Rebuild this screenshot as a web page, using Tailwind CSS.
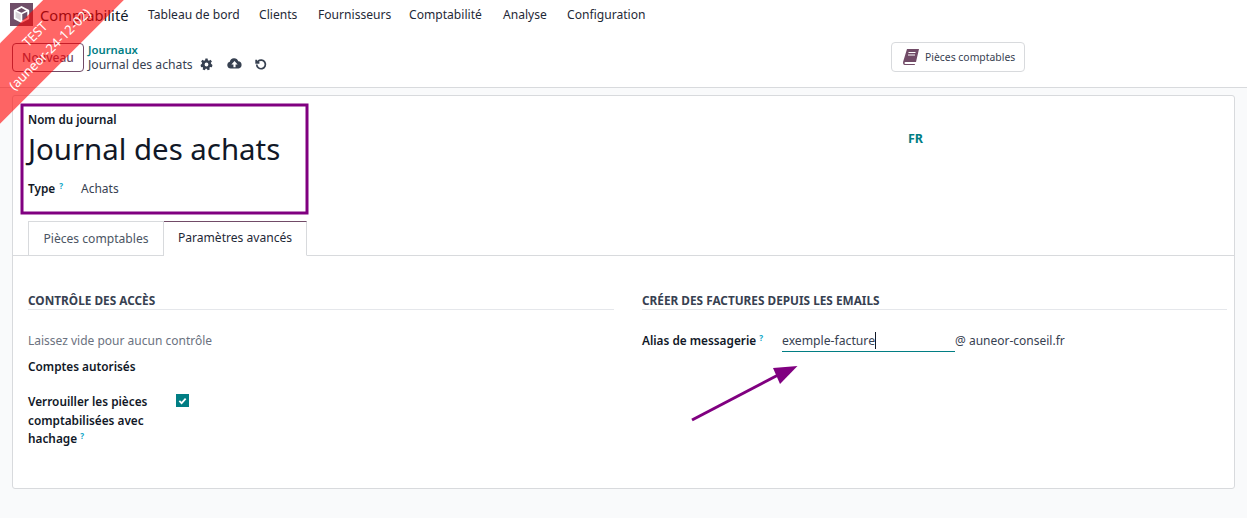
<!DOCTYPE html>
<html><head><script src="https://cdn.jsdelivr.net/npm/@tailwindcss/browser@4"></script></head>
<body class="w-[1247px] h-[518px] overflow-hidden relative bg-[#f9fafb] font-['Noto_Sans',sans-serif] text-[12px] text-[#374151]">
<header class="h-[29px] bg-white flex items-center pl-[10px]">
  <div class="w-[23px] h-[23px] bg-[#6f4f69] flex items-center justify-center">
    <svg viewBox="0 0 24 24" class="w-[19px] h-[19px]"><path d="M4 7l8 4v10l-8-4z" fill="#d9d3d8"/><path d="M12 2.500 20.500 7v10L12 21.500 3.500 17V7z" fill="none" stroke="#fff" stroke-width="2.400" stroke-linejoin="round"/><path d="M4 7l8 4 8-4M12 11v10" fill="none" stroke="#fff" stroke-width="2"/></svg>
  </div>
  <span class="ml-[7px] text-[14.700px] text-[#111827] w-[108px] pt-[1px] whitespace-nowrap">Comptabilité</span>
  <nav class="flex gap-[20px] text-[12.100px] text-[#1f2937] pt-[1px] whitespace-nowrap"><span class="w-[91px]">Tableau de bord</span><span class="w-[39px]">Clients</span><span class="w-[71px]">Fournisseurs</span><span class="w-[74px]">Comptabilité</span><span class="w-[44px]">Analyse</span><span>Configuration</span></nav>
</header>
<section class="h-[59px] bg-white border-b border-[#d8dadd] flex items-start relative">
  <button class="ml-[12px] mt-[14px] h-[29px] w-[72px] border border-[#714b67] rounded-[4px] text-[#714b67] text-[12px] font-medium">Nouveau</button>
  <div class="ml-[4px] mt-[13px] leading-[15px]">
    <div class="text-[#017e84] text-[11.300px] font-semibold">Journaux</div>
    <div class="flex items-center text-[12.200px] -mt-[0.5px]"><span>Journal des achats</span>
      <svg class="ml-[7px] w-[13px] h-[13px]" viewBox="0 0 24 24" fill="#374151"><path fill-rule="evenodd" d="M10 1h4l.6 3.200 2 .9L19.400 3l2.600 3.400-2 2.200.5 2.200L23 13l-1 4-3.200-.5-1.500 1.600.8 3.200-3.900 1.500-1.600-2.800h-2.200l-1.600 2.800-3.900-1.500.8-3.200-1.500-1.600L2 17l-1-4 2.500-2.200.5-2.200L2 6.400 4.600 3l2.800 2.100 2-.9zM12 8.500a3.500 3.500 0 1 0 0 7 3.500 3.500 0 0 0 0-7z"/></svg>
      <svg class="ml-[14px] mb-[2px] w-[15px] h-[13px]" viewBox="0 0 24 20" fill="#374151"><path fill-rule="evenodd" d="M6 18a5.500 5.500 0 0 1-1.500-10.800A7 7 0 0 1 18 6.500 5.800 5.800 0 0 1 18.500 18zM12 6l-5 5.500h3.300V16h3.400v-4.500H17z"/></svg>
      <svg class="ml-[12px] w-[13px] h-[13px]" viewBox="0 0 24 24" fill="none" stroke="#374151" stroke-width="3.200"><path d="M5 12a8 8 0 1 0 2.500-6L4 9M4 3v6h6"/></svg>
    </div>
  </div>
  <button class="absolute left-[891px] top-[13px] w-[134px] h-[30px] border border-[#d8dadd] rounded-[4px] bg-white flex items-center pl-[10px] gap-[5px] text-[10.400px]">
    <svg class="w-[18px] h-[16px]" viewBox="0 0 18 16"><path fill="#714b67" d="M5 0h12l-3 13H3.500a1 1 0 0 0 0 2H13l-.3 1H3C1 16 .8 14 1.200 12.500z"/><path stroke="#fff" d="M6.500 3.500h7M6 6h7"/></svg>
    <span class="pt-[1px]">Pièces comptables</span></button>
</section>
<main class="mx-[12px] mt-[7px] h-[394px] bg-white border border-[#d8dadd] rounded-[3px] relative">
  <div class="pl-[15px] pt-[15px]">
    <div class="text-[11.600px] font-semibold text-[#111827] leading-[18px]">Nom du journal</div>
    <div class="text-[29.400px] leading-[40px] text-[#111827]">Journal des achats</div>
    <div class="flex mt-[11px] leading-[18px]"><span class="font-semibold text-[#111827] w-[53px] text-[11.800px] -mt-[1px]">Type <sup class="text-[#0ea5c6] text-[8px] font-bold ml-[1px]">?</sup></span><span>Achats</span></div>
  </div>
  <div class="absolute left-0 right-0 top-[125px] h-[35px] border-b border-[#d8dadd] flex pl-[15px] text-[12.100px]">
    <div class="w-[136px] h-[35px] border border-[#d8dadd] border-b-0 flex items-center justify-center text-[#4b5563]">Pièces comptables</div>
    <div class="w-[143px] h-[35px] border border-[#d8dadd] border-t-[#714b67] border-b-white border-l-0 bg-white flex items-center justify-center text-[#1f2937]">Paramètres avancés</div>
  </div>
  <div class="absolute left-[15px] right-[7px] top-[197px] grid grid-cols-[586px_585px] gap-[28px]">
    <div>
      <h3 class="font-bold text-[11.800px] text-[#374151] border-b border-[#e5e7eb] leading-[14px] pb-[2px]">CONTRÔLE DES ACCÈS</h3>
      <p class="mt-[22px] text-[#6b7280] leading-[18px]">Laissez vide pour aucun contrôle</p>
      <p class="mt-[7px] font-semibold text-[#111827] leading-[18px] text-[11.800px]">Comptes autorisés</p>
      <div class="mt-[17px] flex"><span class="w-[148px] font-semibold text-[#111827] leading-[18.500px] text-[11.800px]">Verrouiller les pièces comptabilisées avec hachage <sup class="text-[#0ea5c6] text-[8px] font-bold">?</sup></span>
        <span class="w-[13px] h-[13px] mt-[2px] bg-[#017e84] flex items-center justify-center"><svg class="w-[9px] h-[9px]" viewBox="0 0 10 10" fill="none" stroke="#fff" stroke-width="2"><path d="M1.500 5.500 4 8l4.500-5"/></svg></span></div>
    </div>
    <div>
      <h3 class="font-bold text-[11.800px] text-[#374151] border-b border-[#e5e7eb] leading-[14px] pb-[2px]">CRÉER DES FACTURES DEPUIS LES EMAILS</h3>
      <div class="mt-[22px] flex leading-[18px]"><span class="w-[140px] font-semibold text-[#111827] text-[11.800px] -mt-[1px]">Alias de messagerie <sup class="text-[#0ea5c6] text-[8px] font-bold">?</sup></span>
      <span class="w-[173px] h-[20px] border-b border-[#017e84]"><span class="border-r border-[#111827] text-[12.200px]">exemple-facture</span></span><span>@ auneor-conseil.fr</span></div>
    </div>
  </div>
  <div class="absolute left-[895px] top-[35px] text-[#017e84] font-bold text-[12.500px] leading-[16px]">FR</div>
</main>
<svg class="absolute left-0 top-0 pointer-events-none" width="1247" height="518">
  <rect x="22" y="105" width="285" height="108" fill="none" stroke="#800080" stroke-width="3"/>
  <path d="M692 420 780 374" stroke="#800080" stroke-width="3"/>
  <path d="M797.500 366 773 368 780 384z" fill="#800080"/>
</svg>
<div class="absolute left-[-98.500px] top-[13px] w-[280px] h-[57px] -rotate-45 bg-[#ff0000]/60 text-white text-[13px] leading-[21px] text-center flex items-center justify-center">TEST<br>(auneor-24-12-02)</div>
</body></html>
